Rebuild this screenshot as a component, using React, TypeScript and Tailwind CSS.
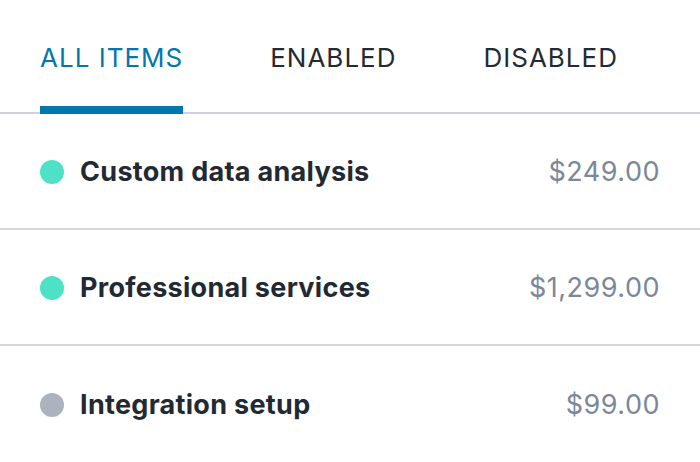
const items = [
  { name: "Custom data analysis", price: "$249.00", enabled: true },
  { name: "Professional services", price: "$1,299.00", enabled: true },
  { name: "Integration setup", price: "$99.00", enabled: false },
];

const tabs = ["ALL ITEMS", "ENABLED", "DISABLED"];

export default function App() {
  return (
    <div className="h-[462px] w-[700px] overflow-hidden bg-white font-['Inter',sans-serif]">
      <div className="flex gap-x-[87px] border-b-2 border-[#cfd3d9] px-10 pt-[42px]">
        {tabs.map((tab, i) => (
          <div key={tab} className="-mb-[2px] flex flex-col">
            <span
              className={`text-[26px] leading-[32px] tracking-[1px] ${
                i === 0 ? "text-[#0477aa]" : "text-[#242a33]"
              }`}
            >
              {tab}
            </span>
            <div className={`mt-[32px] h-[8px] ${i === 0 ? "bg-[#0477aa]" : "bg-transparent"}`} />
          </div>
        ))}
      </div>

      {items.map((item, i) => (
        <div
          key={item.name}
          className={`flex h-[116px] items-center px-10 pt-[2px] ${
            i < items.length - 1 ? "border-b-2 border-[#d4d7dc]" : ""
          }`}
        >
          <span
            className={`mr-4 h-6 w-6 shrink-0 rounded-full ${
              item.enabled ? "bg-[#4de2c5]" : "bg-[#abb3be]"
            }`}
          />
          <span className="flex-1 text-[27px] font-bold tracking-[0.3px] text-[#232933]">
            {item.name}
          </span>
          <span className="text-[27px] tracking-[0.5px] text-[#7b8899]">{item.price}</span>
        </div>
      ))}
    </div>
  );
}
